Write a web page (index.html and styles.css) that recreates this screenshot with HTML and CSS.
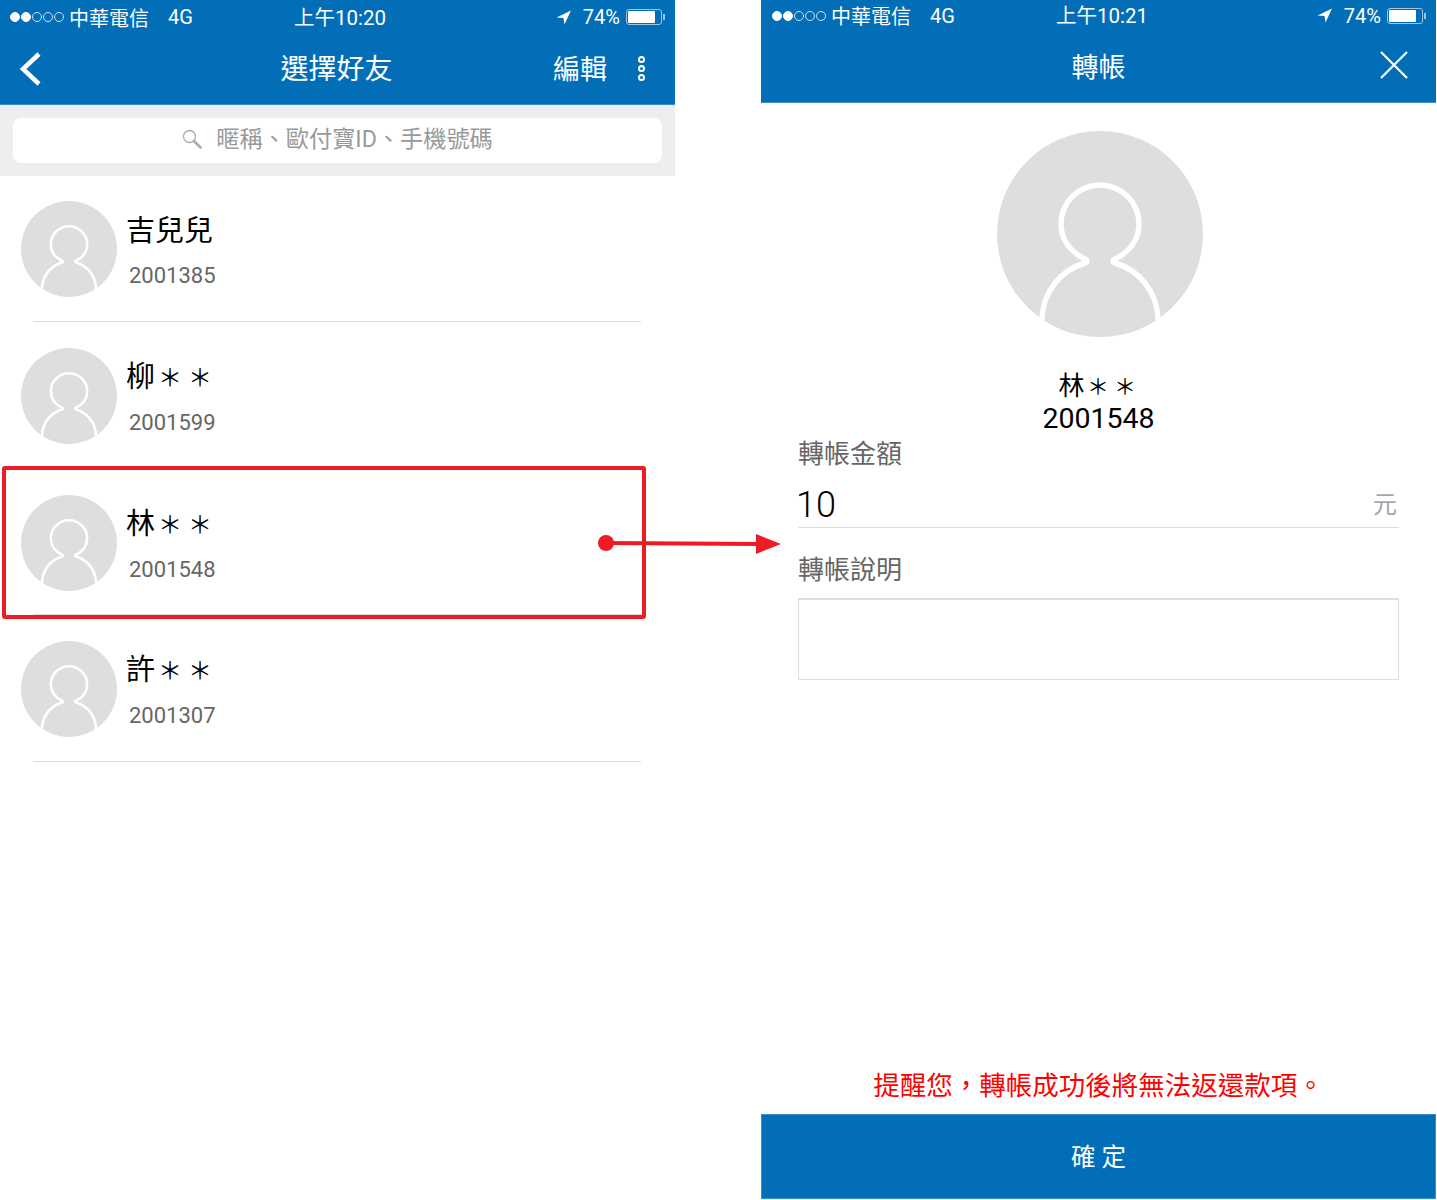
FILE: index.html
```html
<!DOCTYPE html>
<html lang="zh-Hant">
<head>
  <meta charset="UTF-8">
  <title>轉帳</title>
  <link rel="stylesheet" href="styles.css">
</head>
<body>

<svg class="defs" width="0" height="0">
  <symbol id="avatar" viewBox="0 0 206 206">
    <circle cx="103" cy="103" r="103" fill="#dedede"/>
    <path d="M45 188C46 160 64 139 88 132Q92 130 88 128C73 121 64 108 64 93A39 39 0 0 1 142 93C142 108 133 121 118 128Q114 130 118 132C142 139 160 160 161 188" fill="none" stroke="#fff" stroke-width="5.5" stroke-linecap="round"/>
  </symbol>
  <symbol id="locate" viewBox="0 0 15 15">
    <path d="M15 0.5L0.5 7.5L7.5 8L8.5 14.5Z" fill="#fff"/>
  </symbol>
</svg>

<div class="stage">
  <!-- Left phone: friend list -->
  <section class="phone">
    <div class="topbar">
      <div class="status">
        <div class="status-left">
          <span class="signal"><i class="on"></i><i class="on"></i><i></i><i></i><i></i></span>
          <span class="carrier">中華電信</span>
          <span class="net">4G</span>
        </div>
        <div class="status-time">上午10:20</div>
        <div class="status-right">
          <svg class="locate"><use href="#locate"/></svg>
          <span class="pct">74%</span>
          <span class="battery"><span class="battery-fill"></span></span>
        </div>
      </div>
      <div class="nav">
        <svg class="back" width="24" height="36" viewBox="0 0 24 36"><path d="M20 3L4 18L20 33" fill="none" stroke="#fff" stroke-width="4.5"/></svg>
        <h1 class="nav-title">選擇好友</h1>
        <span class="nav-edit">編輯</span>
        <span class="nav-more"><i></i><i></i><i></i></span>
      </div>
    </div>

    <div class="search-band">
      <div class="search-box">
        <svg class="search-icon" width="20" height="20" viewBox="0 0 20 20">
          <circle cx="7.5" cy="7.5" r="6" fill="none" stroke="#aaa" stroke-width="1.3"/>
          <path d="M12 12L18.5 18.5" fill="none" stroke="#aaa" stroke-width="2.6" stroke-linecap="round"/>
        </svg>
        <span class="search-text">暱稱、歐付寶ID、手機號碼</span>
      </div>
    </div>

    <ul class="friends">
      <li class="friend">
        <svg class="friend-avatar"><use href="#avatar"/></svg>
        <div class="friend-text"><div class="friend-name">吉兒兒</div><div class="friend-id">2001385</div></div>
      </li>
      <li class="friend">
        <svg class="friend-avatar"><use href="#avatar"/></svg>
        <div class="friend-text"><div class="friend-name">柳<span class="star">＊</span><span class="star">＊</span></div><div class="friend-id">2001599</div></div>
      </li>
      <li class="friend">
        <svg class="friend-avatar"><use href="#avatar"/></svg>
        <div class="friend-text"><div class="friend-name">林<span class="star">＊</span><span class="star">＊</span></div><div class="friend-id">2001548</div></div>
      </li>
      <li class="friend">
        <svg class="friend-avatar"><use href="#avatar"/></svg>
        <div class="friend-text"><div class="friend-name">許<span class="star">＊</span><span class="star">＊</span></div><div class="friend-id">2001307</div></div>
      </li>
    </ul>
  </section>

  <!-- Right phone: transfer form -->
  <section class="phone phone-right">
    <div class="topbar">
      <div class="status">
        <div class="status-left">
          <span class="signal"><i class="on"></i><i class="on"></i><i></i><i></i><i></i></span>
          <span class="carrier">中華電信</span>
          <span class="net">4G</span>
        </div>
        <div class="status-time">上午10:21</div>
        <div class="status-right">
          <svg class="locate"><use href="#locate"/></svg>
          <span class="pct">74%</span>
          <span class="battery"><span class="battery-fill"></span></span>
        </div>
      </div>
      <div class="nav">
        <h1 class="nav-title nav-title-small">轉帳</h1>
        <svg class="close" width="28" height="28" viewBox="0 0 28 28"><path d="M1 1L27 27M27 1L1 27" stroke="#fff" stroke-width="2.2"/></svg>
      </div>
    </div>

    <div class="payee">
      <svg class="payee-avatar"><use href="#avatar"/></svg>
      <div class="payee-name">林<span class="star">＊</span><span class="star">＊</span></div>
      <div class="payee-id">2001548</div>
    </div>

    <form class="transfer">
      <div class="field-label">轉帳金額</div>
      <div class="amount">
        <span class="amount-value">10</span>
        <span class="amount-unit">元</span>
      </div>
      <div class="field-label field-label-note">轉帳說明</div>
      <div class="note"></div>
    </form>

    <p class="warning">提醒您，轉帳成功後將無法返還款項。</p>
    <div class="confirm">確 定</div>
  </section>

  <!-- Red annotation over the screenshots -->
  <svg class="callout" width="800" height="170" viewBox="0 0 800 170">
    <rect x="4" y="2" width="640" height="149" rx="1" fill="none" stroke="#ed1c24" stroke-width="4"/>
    <circle cx="606" cy="77" r="8" fill="#ed1c24"/>
    <path d="M606 77L760 78" stroke="#ed1c24" stroke-width="4"/>
    <path d="M756 68L781 78L756 88Z" fill="#ed1c24"/>
  </svg>
</div>

</body>
</html>
```

FILE: styles.css
```css
/* General */
* {
  box-sizing: border-box;
}
body {
  margin: 0;
  background: #fff;
  color: #000;
  font-family: Roboto, "Noto Sans CJK TC", sans-serif;
}
.defs {
  display: block;
  height: 0;
}
.stage {
  position: relative;
  display: flex;
  gap: 86px;
  height: 1199px;
}
.phone {
  display: flex;
  flex-direction: column;
  width: 675px;
}

/* Blue top bar */
.topbar {
  height: 105px;
  background: #036eb8;
  border-bottom: 1px solid #3a8fca;
  color: #fff;
}
.phone-right .topbar {
  height: 103px;
}
.status {
  display: flex;
  align-items: center;
  justify-content: space-between;
  position: relative;
  height: 34px;
  padding: 0 10px;
  font-size: 20px;
}
.phone-right .status {
  height: 31px;
  padding-left: 11px;
}
.status-left,
.status-right {
  display: flex;
  align-items: center;
}
.signal {
  display: flex;
  gap: 1px;
  margin-right: 5px;
}
.signal i {
  width: 10px;
  height: 10px;
  border: 1px solid #cfe2f1;
  border-radius: 50%;
}
.signal i.on {
  background: #fff;
  border-color: #fff;
}
.net {
  margin-left: 19px;
}
.status-time {
  position: absolute;
  left: 294px;
  margin-bottom: 2px;
  font-size: 20.5px;
}
.phone-right .status-time {
  left: 295px;
  margin-bottom: 4px;
}
.locate {
  width: 15px;
  height: 15px;
}
.pct {
  margin-left: 12px;
}
.battery {
  position: relative;
  width: 36px;
  height: 16px;
  margin: 0 3px 0 6px;
  padding: 1px;
  border: 1px solid #9cc5e3;
  border-radius: 3px;
}
.battery::after {
  content: "";
  position: absolute;
  top: 4px;
  right: -4px;
  width: 2px;
  height: 6px;
  background: #9cc5e3;
}
.battery-fill {
  display: block;
  width: 27px;
  height: 12px;
  background: #fff;
  border-radius: 1px;
}
.nav {
  position: relative;
  display: flex;
  align-items: center;
  justify-content: center;
  height: 70px;
}
.back {
  position: absolute;
  left: 19px;
  top: 17px;
}
.nav-title {
  margin: 0 2px 4px 0;
  font-size: 28px;
  font-weight: 400;
}
.nav-title-small {
  margin: 0 0 2px;
  font-size: 27px;
}
.nav-edit {
  position: absolute;
  left: 553px;
  top: 14px;
  font-size: 27px;
}
.nav-more {
  position: absolute;
  left: 638px;
  top: 22px;
  display: flex;
  flex-direction: column;
  gap: 2px;
}
.nav-more i {
  width: 7px;
  height: 7px;
  border: 2px solid #fff;
  border-radius: 50%;
}
.close {
  position: absolute;
  left: 619px;
  top: 20px;
}

/* Search */
.search-band {
  height: 71px;
  padding: 13px 13px 0;
  background: #eee;
}
.search-box {
  display: flex;
  align-items: center;
  justify-content: center;
  gap: 14px;
  height: 45px;
  padding-bottom: 4px;
  background: #fff;
  border-radius: 8px;
  color: #999;
  font-size: 23.2px;
}
.search-text {
  margin-bottom: 4px;
}

/* Friend list */
.friends {
  margin: -1px 0 0;
  padding: 0;
  list-style: none;
}
.friend {
  position: relative;
  display: flex;
  align-items: center;
  gap: 9px;
  height: 146.67px;
  padding: 2px 0 0 21px;
}
.friend::after {
  content: "";
  position: absolute;
  left: 33px;
  right: 34px;
  bottom: 0;
  height: 1px;
  background: #ddd;
}
.friend-avatar {
  width: 96px;
  height: 96px;
}
.friend-text {
  padding-top: 3px;
}
.friend-name {
  margin-top: -1px;
  font-size: 29px;
  line-height: 40px;
}
.friend-name .star {
  margin: 0 3px;
  font-size: 24px;
  vertical-align: 1px;
}
.friend-id {
  margin: 11px 0 0 3px;
  color: #666;
  font-size: 22px;
  line-height: 28px;
}

/* Transfer form */
.payee {
  display: flex;
  flex-direction: column;
  align-items: center;
  padding-top: 28px;
}
.payee-avatar {
  width: 206px;
  height: 206px;
  margin-left: 2px;
}
.payee-name {
  margin-top: 32px;
  font-size: 26px;
  line-height: 35px;
}
.payee-name .star {
  margin: 0 2.5px;
  font-size: 22px;
  vertical-align: 1px;
}
.payee-id {
  margin-top: -1px;
  font-size: 28.5px;
  line-height: 32px;
}
.transfer {
  padding: 0 37px;
}
.field-label {
  color: #666;
  font-size: 26px;
  line-height: 38px;
}
.field-label-note {
  margin-top: 23px;
}
.amount {
  display: flex;
  align-items: center;
  justify-content: space-between;
  height: 55px;
  padding-top: 9px;
  border-bottom: 1px solid #ddd;
}
.amount-value {
  margin-left: -2px;
  font-size: 36px;
  font-weight: 300;
}
.amount-unit {
  margin: 0 2px 4px 0;
  color: #a9a2b2;
  font-size: 24px;
}
.note {
  height: 82px;
  margin-top: 9px;
  border: 1px solid #ddd;
  border-top-width: 2px;
}
.warning {
  margin: auto 0 10px;
  color: #f00;
  font-size: 26.5px;
  line-height: 36px;
  text-align: center;
}
.confirm {
  display: flex;
  align-items: center;
  justify-content: center;
  height: 85px;
  padding-bottom: 3px;
  background: #036eb8;
  border: 1px solid #3a8fca;
  color: #fff;
  font-size: 24.5px;
}

/* Annotation */
.callout {
  position: absolute;
  left: 0;
  top: 466px;
}
```
